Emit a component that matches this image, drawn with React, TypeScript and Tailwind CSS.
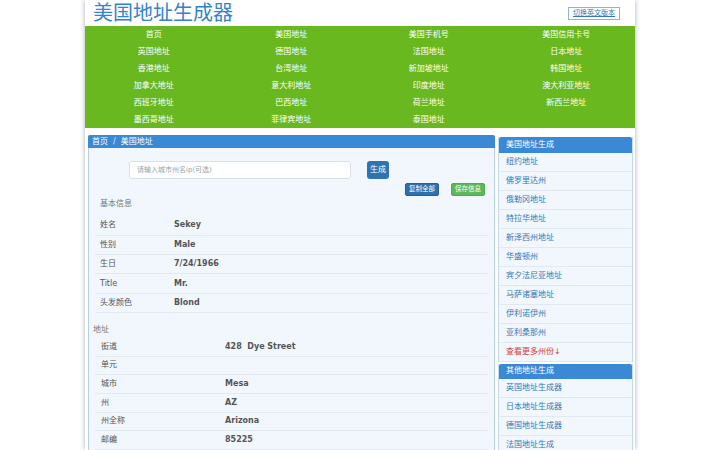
const NAV = [
  "首页", "美国地址", "美国手机号", "美国信用卡号",
  "英国地址", "德国地址", "法国地址", "日本地址",
  "香港地址", "台湾地址", "新加坡地址", "韩国地址",
  "加拿大地址", "意大利地址", "印度地址", "澳大利亚地址",
  "西班牙地址", "巴西地址", "荷兰地址", "新西兰地址",
  "墨西哥地址", "菲律宾地址", "泰国地址",
];

const BASIC = [
  ["姓名", "Sekey"],
  ["性别", "Male"],
  ["生日", "7/24/1966"],
  ["Title", "Mr."],
  ["头发颜色", "Blond"],
];

const ADDRESS = [
  ["街道", "428  Dye Street"],
  ["单元", ""],
  ["城市", "Mesa"],
  ["州", "AZ"],
  ["州全称", "Arizona"],
  ["邮编", "85225"],
];

const STATES = [
  "纽约地址", "佛罗里达州", "俄勒冈地址", "特拉华地址", "新泽西州地址",
  "华盛顿州", "宾夕法尼亚地址", "马萨诸塞地址", "伊利诺伊州", "亚利桑那州",
];

const OTHERS = ["英国地址生成器", "日本地址生成器", "德国地址生成器", "法国地址生成"];

function SideHeader({ children }: { children: React.ReactNode }) {
  return (
    <div className="h-[15.5px] bg-[#3a89d6] text-white text-[8px] flex items-center pl-[7px] rounded-t-[2px]">
      {children}
    </div>
  );
}

function SideItem({ children, red }: { children: React.ReactNode; red?: boolean }) {
  return (
    <div
      className={`h-[19px] border-b border-[#dfe9f2] bg-[#f1f7fd] flex items-center pl-[7px] text-[8px] ${
        red ? "text-[#d9403a]" : "text-[#3178b8]"
      }`}
    >
      {children}
    </div>
  );
}

export default function App() {
  return (
    <div
      className="w-[720px] h-[450px] overflow-hidden bg-white"
      style={{ fontFamily: '"DejaVu Sans", "Noto Sans CJK SC", sans-serif' }}
    >
      <div className="w-[550px] mx-auto h-full bg-white shadow-[0_0_5px_rgba(60,80,110,0.45)] flex flex-col">
        {/* Header */}
        <div className="h-[26px] flex items-center justify-between pl-[8px] pr-[15px]">
          <div className="text-[20px] leading-none text-[#3583cf]">美国地址生成器</div>
          <div className="h-[13px] px-[4px] border border-[#8fb2d6] flex items-center text-[7px] text-[#3178b8] underline">
            切换英文版本
          </div>
        </div>

        {/* Nav */}
        <div className="grid grid-cols-4 bg-[#6ab81f] h-[102px]">
          {NAV.map((n) => (
            <div key={n} className="h-[17px] flex items-center justify-center text-white text-[8px]">
              {n}
            </div>
          ))}
        </div>

        <div className="flex gap-[3px] pl-[3px] pr-[2px] mt-[7px] flex-1 min-h-0">
          {/* Main panel */}
          <div className="w-[407px] flex flex-col border-x border-[#b5cfe6] bg-[#f1f7fd] rounded-t-[2px]">
            <div className="h-[14px] bg-[#3a89d6] -mx-px rounded-t-[2px] flex items-center pl-[4px] text-white text-[8px]">
              首页 <span className="mx-[5px] text-[#d6e6f6]">/</span> 美国地址
            </div>

            <div className="flex items-center pl-[40px] mt-[13px]">
              <div className="w-[222px] h-[18px] bg-white border border-[#d9e1e8] rounded-[3px] flex items-center pl-[7px] text-[7px] text-[#9aa3ab]">
                请输入城市州名ip(可选)
              </div>
              <div className="ml-[16px] w-[22px] h-[18px] bg-[#2f73b3] rounded-[3px] flex items-center justify-center text-white text-[8px]">
                生成
              </div>
            </div>

            <div className="flex justify-end gap-[12px] pr-[9px] mt-[4px]">
              <div className="h-[13px] px-[3px] bg-[#2f6fae] rounded-[2px] border border-[#285f96] flex items-center text-white text-[6.5px]">
                复制全部
              </div>
              <div className="h-[13px] px-[3px] bg-[#5cb85c] rounded-[2px] border border-[#4cae4c] flex items-center text-white text-[6.5px]">
                保存信息
              </div>
            </div>

            <div className="h-[18px] flex items-center pl-[11px] pb-[2px] text-[8px] text-[#777]">基本信息</div>
            <div className="mx-[6px] mt-[3px]">
              {BASIC.map(([k, v]) => (
                <div key={k} className="h-[19.4px] border-b border-[#e3ebf2] flex items-center text-[8px] text-[#555]">
                  <div className="w-[79px] pl-[5px]">{k}</div>
                  <div className="font-bold">{v}</div>
                </div>
              ))}
            </div>

            <div className="h-[26px] flex items-end pb-[2px] pl-[4px] text-[8px] text-[#777]">地址</div>
            <div className="mx-[6px]">
              {ADDRESS.map(([k, v]) => (
                <div key={k} className="h-[18.7px] border-b border-[#e3ebf2] flex items-center text-[8px] text-[#555]">
                  <div className="w-[130px] pl-[6px]">{k}</div>
                  <div className="font-bold whitespace-pre">{v}</div>
                </div>
              ))}
            </div>
          </div>

          {/* Sidebar */}
          <div className="w-[135px] flex flex-col pt-[2px]">
            <div className="border-x border-[#c4d9ec]">
              <SideHeader>美国地址生成</SideHeader>
              {STATES.map((s) => (
                <SideItem key={s}>{s}</SideItem>
              ))}
              <SideItem red>查看更多州份↓</SideItem>
            </div>
            <div className="border-x border-[#c4d9ec] mt-[2px]">
              <SideHeader>其他地址生成</SideHeader>
              {OTHERS.map((s) => (
                <SideItem key={s}>{s}</SideItem>
              ))}
            </div>
          </div>
        </div>
      </div>
    </div>
  );
}
